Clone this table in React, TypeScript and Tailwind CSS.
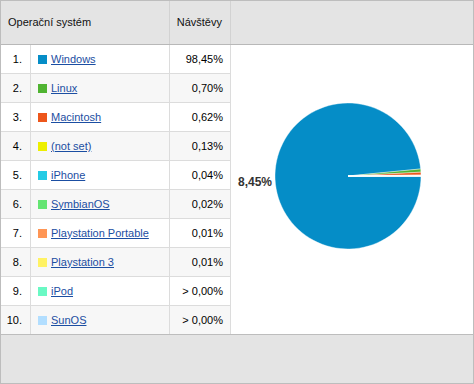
import React from "react";

const rows = [
  { n: "1.", name: "Windows", v: "98,45%", c: "#058dc7", p: 98.45 },
  { n: "2.", name: "Linux", v: "0,70%", c: "#50b432", p: 0.7 },
  { n: "3.", name: "Macintosh", v: "0,62%", c: "#ed561b", p: 0.62 },
  { n: "4.", name: "(not set)", v: "0,13%", c: "#edef00", p: 0.13 },
  { n: "5.", name: "iPhone", v: "0,04%", c: "#24cbe5", p: 0.04 },
  { n: "6.", name: "SymbianOS", v: "0,02%", c: "#64e572", p: 0.02 },
  { n: "7.", name: "Playstation Portable", v: "0,01%", c: "#ff9655", p: 0.01 },
  { n: "8.", name: "Playstation 3", v: "0,01%", c: "#fff263", p: 0.01 },
  { n: "9.", name: "iPod", v: "> 0,00%", c: "#6af9c4", p: 0.005 },
  { n: "10.", name: "SunOS", v: "> 0,00%", c: "#b2deff", p: 0.005 },
];

function Pie() {
  const cx = 117;
  const cy = 131;
  const r = 73;
  const total = rows.reduce((s, x) => s + x.p, 0);
  let a = 0;
  const paths = rows.map((row, i) => {
    const a0 = a;
    const a1 = a + (row.p / total) * Math.PI * 2;
    a = a1;
    const x0 = cx + r * Math.cos(a0);
    const y0 = cy + r * Math.sin(a0);
    const x1 = cx + r * Math.cos(a1);
    const y1 = cy + r * Math.sin(a1);
    const large = a1 - a0 > Math.PI ? 1 : 0;
    const d = `M ${cx} ${cy} L ${x0} ${y0} A ${r} ${r} 0 ${large} 1 ${x1} ${y1} Z`;
    return <path key={i} d={d} fill={row.c} stroke="#ffffff" strokeWidth={0.4} />;
  });
  return (
    <svg width="242" height="289" viewBox="0 0 242 289" className="block">
      <defs>
        <linearGradient id="hl" x1="0" y1="0" x2="1" y2="0">
          <stop offset="0" stopColor="#ffffff" stopOpacity="1" />
          <stop offset="1" stopColor="#ffffff" stopOpacity="0" />
        </linearGradient>
      </defs>
      {paths}
      <path d={`M ${cx} ${cy} L ${cx + 73} ${cy - 1.3} L ${cx + 73} ${cy + 0.6} Z`} fill="url(#hl)" />
      <text
        x="7"
        y="141"
        fill="#333333"
        fontSize="12"
        fontWeight="bold"
        fontFamily="'Liberation Sans', Arial, sans-serif"
      >
        8,45%
      </text>
    </svg>
  );
}

export default function App() {
  return (
    <div
      className="w-[474px] h-[384px] border border-[#bdbdbd] bg-white flex flex-col text-[11px] text-black"
      style={{ fontFamily: "'Liberation Sans', Arial, sans-serif" }}
    >
      <div className="h-[44px] flex bg-[#e4e4e4] border-b border-[#b8b8b8]">
        <div className="w-[169px] border-r border-[#d2d2d2] flex items-center pl-[7px] text-[#111]">
          Operační systém
        </div>
        <div className="w-[61px] border-r border-[#d2d2d2] flex items-center justify-end pr-[8px] text-[#111]">
          Návštěvy
        </div>
        <div className="flex-1" />
      </div>
      <div className="flex h-[289px]">
        <div className="w-[231px] border-r border-[#dcdcdc] flex flex-col">
          {rows.map((row, i) => (
            <div
              key={i}
              className={`flex ${i < 9 ? "h-[29px] border-b border-[#dcdcdc]" : "h-[28px]"} ${
                i % 2 === 1 ? "bg-[#f7f7f7]" : "bg-white"
              }`}
            >
              <div className="w-[30px] border-r border-[#dcdcdc] flex items-center justify-end pr-[8px]">
                {row.n}
              </div>
              <div className="w-[139px] border-r border-[#dcdcdc] flex items-center pl-[7px]">
                <span className="w-[9px] h-[9px] mr-[4px] shrink-0" style={{ backgroundColor: row.c }} />
                <a href="#" className="underline text-[#1b4ea2]">
                  {row.name}
                </a>
              </div>
              <div className="flex-1 flex items-center justify-end pr-[7px]">{row.v}</div>
            </div>
          ))}
        </div>
        <div className="flex-1 bg-white">
          <Pie />
        </div>
      </div>
      <div className="flex-1 bg-[#e4e4e4] border-t border-[#bdbdbd]" />
    </div>
  );
}
